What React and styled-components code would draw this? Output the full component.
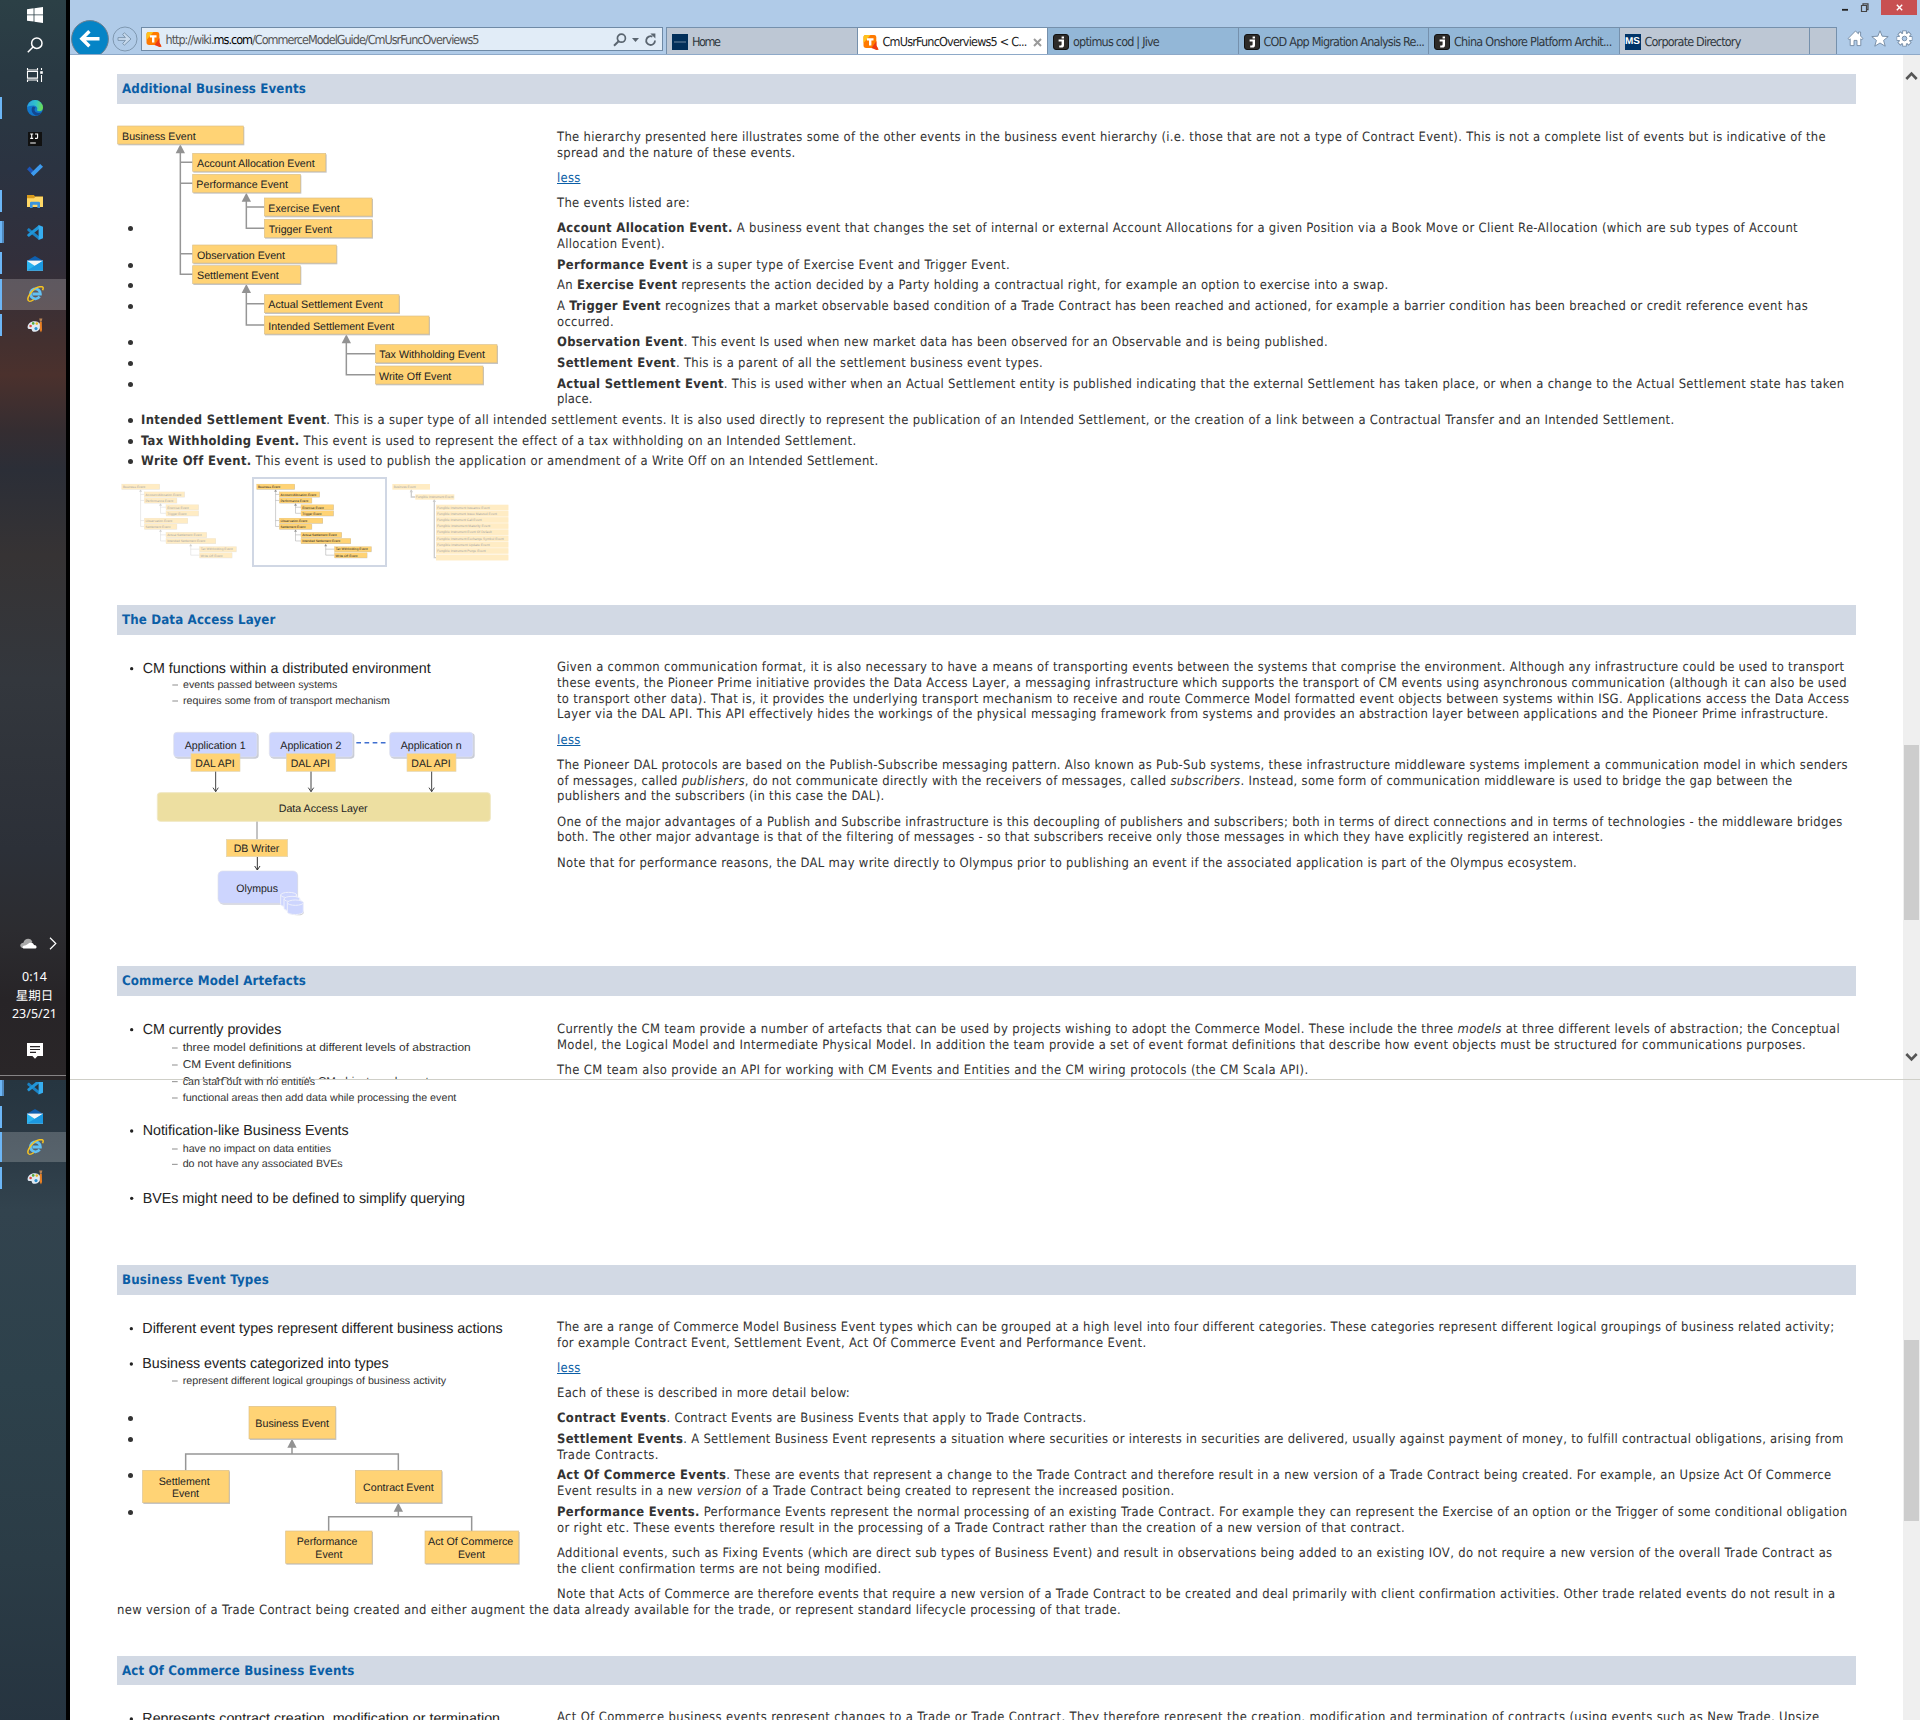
import React, { useLayoutEffect, useRef, useState } from "react";
import styled, { createGlobalStyle, css } from "styled-components";

const GlobalStyle = createGlobalStyle`
  * { box-sizing: border-box; }
  html, body { margin: 0; padding: 0; background: #fff; }
  body {
    width: 1920px;
    height: 1720px;
    overflow: hidden;
    font-family: "DejaVu Sans Condensed", "DejaVu Sans", "Noto Sans CJK SC", sans-serif;
    font-stretch: condensed;
    text-rendering: geometricPrecision;
    color: #333;
  }
`;

const ui = '"DejaVu Sans Condensed", "DejaVu Sans", sans-serif';

/* ---------- page frame ---------- */

const Page = styled.div`
  display: grid;
  grid-template-columns: 70px 1fr;
  width: 1920px;
  height: 1720px;
  overflow: hidden;
`;

const Taskbars = styled.aside`
  display: flex;
  flex-direction: column;
  border-right: 4px solid #000;
`;

const Windows = styled.div`
  display: flex;
  flex-direction: column;
  min-width: 0;
`;

/* ---------- taskbar ---------- */

const Taskbar = styled.div`
  display: flex;
  flex-direction: column;
  height: 1076px;
  border-bottom: 1px solid #868385;
  background: linear-gradient(
    180deg,
    #2c4046 0,
    #293943 75px,
    #2b3341 170px,
    #322f3b 262px,
    #44302f 345px,
    #4b312d 375px,
    #352d31 430px,
    #2b2e37 470px,
    #363334 555px,
    #33373d 680px,
    #2c3038 850px,
    #2c2c30 930px,
    #272427 1000px,
    #2a2628 1076px
  );
`;

const TaskbarRest = styled.div`
  display: flex;
  flex-direction: column;
  flex: 1;
  border-top: 4px solid #2a2628;
  background: linear-gradient(180deg, #263540 0, #2b3944 60px, #32434e 130px, #2d414b 300px, #2b3c46 480px, #263440 644px);
`;

const TaskItem = styled.div`
  display: flex;
  align-items: center;
  justify-content: center;
  flex: none;
  height: ${(p) => p.$h || 31}px;
  padding-left: 4px;
  margin-top: ${(p) => p.$mt || 0}px;
  ${(p) =>
    p.$running &&
    css`
      background: linear-gradient(#6cb6f6, #6cb6f6) 0 50% / 2px ${p.$active ? "100%" : "22px"} no-repeat;
    `}
  ${(p) =>
    p.$stacked &&
    css`
      background: linear-gradient(#6cb6f6, #6cb6f6) 0 50% / 2px 22px no-repeat,
        linear-gradient(#4f88bd, #4f88bd) 2px 50% / 2px 22px no-repeat;
    `}
  ${(p) => p.$active && css`background-color: rgba(255, 255, 255, 0.2);`}
`;

const Tray = styled.div`
  display: flex;
  flex-direction: column;
  align-items: center;
  margin-top: auto;
  color: #fff;
`;

const TrayRow = styled.div`
  display: flex;
  align-items: center;
  gap: 12px;
  padding-left: 11px;
  height: 20px;
`;

const Clock = styled.div`
  display: flex;
  flex-direction: column;
  align-items: center;
  margin: 15px 0 0 3px;
  font: 12.5px/18.6px "Noto Sans", "Noto Sans CJK SC", sans-serif;
`;

const NoteSlot = styled.div`
  margin: 19px 0 16px 4px;
  height: 16px;
  display: flex;
`;

/* ---------- browser chrome ---------- */

const Header = styled.header`
  display: flex;
  flex-direction: column;
  height: 55px;
  border-bottom: 1px solid #8ea9c8;
  background: #b0cbe8;
  overflow: hidden;
  flex: none;
`;

const WindowControls = styled.div`
  display: flex;
  justify-content: flex-end;
  align-items: center;
  height: 15px;
  padding-right: 3px;
  gap: 12px;
`;

const CloseButton = styled.div`
  display: flex;
  align-items: center;
  justify-content: center;
  width: 36px;
  height: 15px;
  background: #c85051;
`;

const NavRow = styled.div`
  display: flex;
  align-items: flex-start;
  height: 39px;
`;

const Back = styled.div`
  margin: 5px 3px 0 1px;
  width: 38px;
  height: 38px;
  flex: none;
`;

const Forward = styled.div`
  margin: 11px 3px 0 0;
  width: 26px;
  height: 26px;
  flex: none;
`;

const AddressBar = styled.div`
  display: flex;
  align-items: center;
  width: 522px;
  height: 24px;
  margin: 12px 3px 0 0;
  padding: 1px 5px 0 4px;
  border: 1px solid #6f8aa6;
  background: #e1ecf7;
  font: 12.5px/22px ${ui};
  color: #555;
  white-space: nowrap;
  b { font-weight: normal; color: #000; }
`;

const UrlSlot = styled.div`
  flex: 1;
  padding-left: 3.5px;
`;

const AddressTools = styled.div`
  display: flex;
  align-items: center;
  gap: 5px;
`;

const Tabs = styled.nav`
  display: flex;
  height: 27px;
  margin-top: 12px;
  border-top: 1px solid #7590ac;
  border-right: 1px solid #7590ac;
`;

const tabColors = { grey: "#bdc7d4", blue: "#93b7d7", active: "#ffffff" };

const Tab = styled.div`
  display: flex;
  align-items: center;
  width: ${(p) => p.$w || 190.5}px;
  flex: none;
  padding: 2px 5px 0 5px;
  gap: 4px;
  background: ${(p) => tabColors[p.$tone]};
  border-left: 1px solid #7590ac;
  font: 12.5px/20px ${ui};
  color: ${(p) => (p.$tone === "active" ? "#222" : "#303840")};
  white-space: nowrap;
  svg { flex: none; }
`;

const TabClose = styled.div`
  margin-left: auto;
  display: flex;
`;

const ToolIcons = styled.div`
  display: flex;
  align-items: center;
  gap: 7px;
  margin: 15px 0 0 10px;
`;

/* ---------- document ---------- */

const Viewport = styled.div`
  display: flex;
  height: ${(p) => (p.$h ? p.$h + "px" : "auto")};
  flex: ${(p) => (p.$h ? "none" : "1")};
  overflow: ${(p) => (p.$clip ? "hidden" : "visible")};
  min-height: 0;
`;

const Doc = styled.main`
  width: 1833px;
  padding: ${(p) => p.$top || 0}px 47px 0;
`;

const Rail = styled.div`
  display: flex;
  flex-direction: column;
  align-items: center;
  width: 17px;
  background: #efefef;
`;

const Thumb = styled.div`
  width: 15px;
  height: ${(p) => p.$h}px;
  margin-top: ${(p) => p.$mt}px;
  background: #cdcdcd;
  flex: none;
`;

const RailArrow = styled.div`
  display: flex;
  margin-top: ${(p) => p.$mt}px;
  flex: none;
`;

const Divider = styled.div`
  height: 1px;
  background: #cfcfc8;
  flex: none;
`;

const Section = styled.section`
  height: ${(p) => p.$h}px;
`;

const Heading = styled.h2`
  margin: 0;
  height: ${(p) => p.$h || 30}px;
  padding: 0 5px;
  background: #d2d9e4;
  color: #0b5ea6;
  font: bold 13.2px/31px ${ui};
`;

const Body = styled.div`
  padding-top: ${(p) => p.$pt || 25}px;
  font: 12.9px/15.8px ${ui};
`;

const Figure = styled.figure`
  float: left;
  margin: ${(p) => p.$mt || 0}px 0 0;
  width: 440px;
  height: ${(p) => p.$h}px;
  svg { display: block; overflow: visible; }
`;

const Para = styled.p`
  margin: 0 0 9.4px;
`;

const List = styled.ul`
  list-style: none;
  margin: 0 0 ${(p) => p.$mb || 0}px;
  padding: 0 0 0 24px;
`;

const Item = styled.li`
  position: relative;
  margin-bottom: 4.8px;
  &::before {
    content: "";
    position: absolute;
    left: -13px;
    top: 5px;
    width: 5px;
    height: 5px;
    border-radius: 50%;
    background: #333;
  }
`;

const LineBox = styled.span`
  display: block;
  height: 15.8px;
  white-space: nowrap;
`;

const LineText = styled.span`
  font-variant-ligatures: none;
  a { color: #0b5ea6; text-decoration: underline; }
`;

const Thumbs = styled.div`
  display: flex;
  width: 405px;
  padding-top: 2.5px;
`;

const ThumbFrame = styled.div`
  width: 135px;
  height: 90px;
  border: 2px solid ${(p) => (p.$on ? "#d0d7e4" : "transparent")};
  svg { display: block; overflow: visible; opacity: ${(p) => (p.$on ? 1 : 0.42)}; }
`;

/* A single line of text, tracked so that it measures w pixels. */
function Fit({ w, children }) {
  const ref = useRef(null);
  const [tracking, setTracking] = useState(0);
  useLayoutEffect(() => {
    const el = ref.current;
    el.style.letterSpacing = "0px";
    const natural = el.getBoundingClientRect().width;
    setTracking((w - natural) / el.textContent.length);
  }, [w]);
  return (
    <LineText ref={ref} style={{ letterSpacing: tracking + "px" }}>
      {children}
    </LineText>
  );
}

function Line({ w, children }) {
  return (
    <LineBox>
      <Fit w={w}>{children}</Fit>
    </LineBox>
  );
}

const Less = () => (
  <Para>
    <Line w={23.5}>
      <a>less</a>
    </Line>
  </Para>
);

/* ---------- diagram parts ---------- */

const DIAGRAM = '"Liberation Sans", Arial, sans-serif';

function T({ x, y, w, s = 32.5, c = "#222", children }) {
  return (
    <text x={x} y={y} fontSize={s} fill={c} fontFamily={DIAGRAM} textLength={w} lengthAdjust="spacingAndGlyphs">
      {children}
    </text>
  );
}

function Node({ x, y, w, h = 54 }) {
  return (
    <g>
      <rect x={x + 2} y={y + 3} width={w + 1} height={h + 1} fill="#c4c4c4" />
      <rect x={x} y={y} width={w} height={h} fill="#ffd375" stroke="#dcc08a" strokeWidth="2" />
    </g>
  );
}

const Up = ({ x, y }) => <path d={`M${x} ${y}l14 27h-28z`} fill="#929292" />;

const Bullet = ({ x, y, w, children }) => (
  <g>
    <circle cx={x} cy={y - 13} r="5" fill="#222" />
    <T x={x + 33} y={y} w={w} s={44}>{children}</T>
  </g>
);

const Dash = ({ x, y, w, s = 31.5, children }) => (
  <g>
    <path d={`M${x} ${y - 9}h17`} stroke="#777" strokeWidth="2.5" />
    <T x={x + 32} y={y} w={w} s={s} c="#333">{children}</T>
  </g>
);

const treeNodes = [
  [143, 48, 377, "Business Event", 156, 221],
  [368, 130, 399, "Account Allocation Event", 381, 353],
  [368, 193, 323, "Performance Event", 379, 275],
  [583, 264, 323, "Exercise Event", 595, 214],
  [583, 328, 323, "Trigger Event", 596, 190],
  [368, 405, 431, "Observation Event", 381, 264],
  [368, 467, 323, "Settlement Event", 381, 245],
  [583, 554, 404, "Actual Settlement Event", 595, 343],
  [583, 618, 494, "Intended Settlement Event", 595, 378],
  [916, 704, 365, "Tax Withholding Event", 928, 317],
  [916, 768, 323, "Write Off Event", 927, 217],
];

function Tree() {
  return (
    <g>
      <path
        d="M331 125V493H368M331 157h37M331 220h37M331 431h37M529 270V355H583M529 291h54M529 545V645H583M529 581h54M829 695V794H916M829 731h87"
        fill="none"
        stroke="#969696"
        strokeWidth="4.5"
      />
      <Up x={331} y={103} />
      <Up x={529} y={248} />
      <Up x={529} y={522} />
      <Up x={829} y={673} />
      {treeNodes.map(([x, y, w, label, tx, tw]) => (
        <g key={label}>
          <Node x={x} y={y} w={w} />
          <T x={tx} y={y + 41} w={tw}>{label}</T>
        </g>
      ))}
    </g>
  );
}

const instrumentEvents = [
  "Fungible Instrument Issuance Event",
  "Fungible Instrument Issue Matured Event",
  "Fungible Instrument Call Event",
  "Fungible Instrument Maturity Event",
  "Fungible Instrument Event Of Default",
  "Fungible Instrument Exchange Symbol Event",
  "Fungible Instrument Update Event",
  "Fungible Instrument Purge Event",
];

const instrumentWidths = [158, 180, 134, 160, 164, 200, 158, 146];

function InstrumentTree() {
  return (
    <svg width="131" height="86" viewBox="957 1107 393 258">
      <path d="M1024 1139V1161H1036M1093 1168V1343H1099" fill="none" stroke="#8a8a8a" strokeWidth="4" />
      <path d="M1024 1138l5 9h-10zM1093 1167l5 9h-10z" fill="#8a8a8a" />
      <rect x="967" y="1122" width="113" height="17" fill="#ffd375" />
      <T x={971} y={1134} w={66} s={10}>Business Event</T>
      <rect x="1036" y="1153" width="117" height="16" fill="#ffd375" />
      <T x={1037} y={1165} w={113} s={10}>Fungible Instrument Event</T>
      <rect x="1098" y="1184" width="217" height="167" fill="#ffe9bb" />
      {instrumentEvents.map((label, i) => (
        <g key={label}>
          <rect x="1098" y={1184.5 + i * 18.6} width="217" height="16" fill="#ffd375" />
          <T x={1101} y={1196 + i * 18.6} w={instrumentWidths[i]} s={10}>{label}</T>
        </g>
      ))}
      <rect x="1098" y="1335" width="217" height="16" fill="#ffd375" />
    </svg>
  );
}

const MiniTree = () => (
  <svg width="131" height="86" viewBox="553 1107 393 258">
    <g transform="translate(517.8 1108.4) scale(0.302 0.286)">
      <Tree />
    </g>
  </svg>
);

function ApplicationStack({ x, label, lx, lw, ax }) {
  return (
    <g>
      <rect x={x + 3} y={280} width={252} height={76} rx="10" fill="#c9ccd6" />
      <rect x={x} y={277} width={250} height={74} rx="10" fill="#cdd5fe" stroke="#dfe1ea" strokeWidth="2" />
      <T x={lx} y={326} w={lw}>{label}</T>
      <rect x={ax} y={341} width={147} height={53} fill="#ffd375" stroke="#e2d5b5" strokeWidth="2" />
      <T x={ax + 13} y={381} w={118}>DAL API</T>
      <path d={`M${ax + 74} 395v60m-8 -12l8 12l8 -12`} fill="none" stroke="#444" strokeWidth="3" />
    </g>
  );
}

const Cylinder = ({ x, y }) => (
  <g fill="#cdd5fe" stroke="#eef0fb" strokeWidth="3">
    <path d={`M${x} ${y}v28c0 10 48 10 48 0v-28z`} />
    <ellipse cx={x + 24} cy={y} rx="24" ry="8" />
  </g>
);

function AccessLayerDiagram() {
  return (
    <svg width="440" height="280" viewBox="51 57 1320 840">
      <Bullet x={95} y={99} w={864}>CM functions within a distributed environment</Bullet>
      <Dash x={217} y={144} w={463}>events passed between systems</Dash>
      <Dash x={217} y={192} w={621}>requires some from of transport mechanism</Dash>
      <ApplicationStack x={221} label="Application 1" lx={254} lw={183} ax={273} />
      <ApplicationStack x={508} label="Application 2" lx={541} lw={183} ax={559} />
      <ApplicationStack x={869} label="Application n" lx={902} lw={183} ax={921} />
      <path d="M769 308h88" stroke="#3f6fd0" strokeWidth="4.5" strokeDasharray="14 10.5" />
      <rect x="172" y="458" width="999" height="86" rx="9" fill="#eddfa1" stroke="#f0e8c4" strokeWidth="3" />
      <T x={536} y={515} w={267}>Data Access Layer</T>
      <path d="M471 545v52" stroke="#888" strokeWidth="3" />
      <rect x="379" y="598" width="184" height="52" fill="#ffd375" stroke="#e2d5b5" strokeWidth="2" />
      <T x={401} y={637} w={137}>DB Writer</T>
      <path d="M472 651v39m-8 -12l8 12l8 -12" fill="none" stroke="#333" strokeWidth="3" />
      <rect x="357" y="697" width="237" height="97" rx="14" fill="#cfd1da" />
      <rect x="354" y="693" width="239" height="97" rx="14" fill="#cdd5fe" stroke="#dfe1ea" strokeWidth="2" />
      <T x={409} y={756} w={125}>Olympus</T>
      <path d="M560 806q10 20 32 20t20 -14" fill="#c9c9c9" />
      <Cylinder x={542} y={765} />
      <Cylinder x={552} y={777} />
      <Cylinder x={562} y={788} />
    </svg>
  );
}

function TypesDiagram() {
  return (
    <svg width="440" height="278" viewBox="141 207 1320 834">
      <Bullet x={184} y={249} w={1081}>Different event types represent different business actions</Bullet>
      <Bullet x={184} y={355} w={739}>Business events categorized into types</Bullet>
      <Dash x={306} y={402} w={790}>represent different logical groupings of business activity</Dash>
      <path d="M347 661V612H985V661M666 612V585M776 843V800H1205V843M985 800V775" fill="none" stroke="#969696" strokeWidth="4.5" />
      <Up x={666} y={566} />
      <Up x={985} y={758} />
      <Node x={537} y={469} w={259} h={97} />
      <T x={556} y={531} w={221}>Business Event</T>
      <Node x={218} y={661} w={259} h={97} />
      <T x={266} y={704} w={153}>Settlement</T>
      <T x={306} y={741} w={81}>Event</T>
      <Node x={856} y={661} w={259} h={97} />
      <T x={879} y={724} w={212}>Contract Event</T>
      <Node x={647} y={843} w={259} h={97} />
      <T x={680} y={886} w={182}>Performance</T>
      <T x={736} y={923} w={81}>Event</T>
      <Node x={1065} y={843} w={281} h={97} />
      <T x={1074} y={886} w={256}>Act Of Commerce</T>
      <T x={1164} y={923} w={81}>Event</T>
    </svg>
  );
}

/* ---------- icons ---------- */

const WindowsIcon = () => (
  <svg width="16" height="16" viewBox="0 0 16 16" fill="#fff">
    <path d="M0 2.2L6.6 1.3V7.5H0zM7.4 1.2L16 0V7.5H7.4zM0 8.3H6.6V14.6L0 13.7zM7.4 8.3H16V16L7.4 14.8z" />
  </svg>
);

const SearchIcon = () => (
  <svg width="18" height="16" viewBox="0 0 18 16" fill="none" stroke="#fff" strokeWidth="1.5">
    <circle cx="10.8" cy="6.2" r="5.2" />
    <path d="M7 10L1.8 15.2" />
  </svg>
);

const TaskViewIcon = () => (
  <svg width="18" height="16" viewBox="0 0 18 16" fill="none" stroke="#fff" strokeWidth="1.1">
    <path d="M1.5 1v2h10V1M1.5 15v-2h10v2M1.5 4.5h10v6.6h-10zM15.5 1v2M15.5 8v7" />
    <rect x="14.2" y="4.2" width="2.6" height="2.6" fill="#fff" stroke="none" />
  </svg>
);

const EdgeIcon = () => (
  <svg width="16" height="16" viewBox="0 0 16 16">
    <defs>
      <linearGradient id="edgeTop" x1="0" y1="0.4" x2="1" y2="0.5">
        <stop offset="0" stopColor="#2a9fe0" />
        <stop offset="0.55" stopColor="#31c3c9" />
        <stop offset="1" stopColor="#6fe04a" />
      </linearGradient>
    </defs>
    <circle cx="8" cy="8" r="8" fill="#1277cc" />
    <path d="M0.1 7A8 8 0 0 1 16 7.4C16 10 14 11.2 12 11.2S9.6 10.2 10.2 9.2C10.8 7.4 9 5.4 6.4 5.4S1 6.2 0.1 7z" fill="url(#edgeTop)" />
    <path d="M6 6.6C3.6 8.4 4.4 13.6 8.6 15.6C12 15.6 14 14 14.8 12.2C12 13.6 8 13 7.6 10.2C7.4 8.8 8 8 8.6 7.4z" fill="#14478f" />
  </svg>
);

const IntelliJIcon = () => (
  <svg width="14" height="14" viewBox="0 0 14 14">
    <rect width="14" height="14" fill="#111" />
    <path d="M2.2 2h3M3.7 2v4.4M2.2 6.4h3M7 2h2.6v3.4q0 1-1.1 1H7M2.2 11h5.6" fill="none" stroke="#fff" strokeWidth="1.1" />
  </svg>
);

const TodoIcon = () => (
  <svg width="16" height="12" viewBox="0 0 16 12">
    <path d="M2.6 2.6L0 5.2L6.4 11.8L9 9.2z" fill="#1d55b8" />
    <path d="M13.2 0L16 2.8L6.6 12L3.8 9.2z" fill="#3d9bee" />
  </svg>
);

const FolderIcon = () => (
  <svg width="16" height="13" viewBox="0 0 16 13">
    <path d="M0 0h6.8l1.4 1.6H16V4H0z" fill="#d79a1c" />
    <path d="M0 3.2h7l1.4-1.4H16V12H0z" fill="#ffd866" />
    <path d="M3 13V8q0-1.2 1.2-1.2h7.6q1.2 0 1.2 1.2v5h-2.6V9.8H5.6V13z" fill="#3a94dd" />
  </svg>
);

const VsCodeIcon = ({ cut }) => (
  <svg width="16" height={cut ? 13 : 15} viewBox={cut ? "0 2.5 16 13" : "0 0 16 15"}>
    <path d="M0.3 4.2L1.8 3L12 11.2V15L0.3 5.4z" fill="#1a82c4" />
    <path d="M0.3 10.6L1.8 12L12 4V0L0.3 9.4z" fill="#2196d8" />
    <path d="M11.6 0L16 1.8V13.2L11.6 15z" fill="#36aef0" />
  </svg>
);

const MailIcon = () => (
  <svg width="16" height="15" viewBox="0 0 16 15">
    <path d="M0 4.8L8 0L16 4.8V9H0z" fill="#0f5fae" />
    <path d="M0 4.6H16V14.6H0z" fill="#f4f6f8" />
    <path d="M0 4.8L8 10L16 4.8V14.6H0z" fill="#2cb4f0" />
    <path d="M0 14.6L16 4.8V14.6z" fill="#1c98e0" />
  </svg>
);

const IeIcon = () => (
  <svg width="17" height="16" viewBox="0 0 17 16">
    <path d="M12.6 10.6A5 5 0 1 1 13.4 8H5.4" fill="none" stroke="#63c1f3" strokeWidth="2.8" />
    <path d="M1.8 15C-1.4 12.6 6 0.8 14 0.6C16.4 0.6 16.6 2 15.6 4.2" fill="none" stroke="#f6c421" strokeWidth="1.5" />
    <path d="M1.8 15C3 15.8 5.6 14.4 7 13.4" fill="none" stroke="#f6c421" strokeWidth="1.2" />
  </svg>
);

const PaintIcon = () => (
  <svg width="17" height="15" viewBox="0 0 17 15">
    <path d="M0.6 9.4C0.4 5.6 4 3 8 3.2C12 3.4 14 6 13.4 9C12.8 12.4 9.4 14.2 6.6 13.8C4.6 13.4 5.4 11.6 4.2 11C3 10.6 0.8 11.6 0.6 9.4z" fill="#dfe9f2" />
    <circle cx="3.6" cy="8" r="1.3" fill="#e2493a" />
    <circle cx="6.2" cy="5.4" r="1.3" fill="#55a83a" />
    <circle cx="9.8" cy="5.6" r="1.3" fill="#e7b52b" />
    <circle cx="9" cy="10.6" r="1.6" fill="#2b8fd0" />
    <path d="M12.2 0.4h3.2l-0.8 3.4h-1.6z" fill="#b98455" />
    <path d="M12.8 4h2l0.2 8l-1 2.6l-1.2-2.6z" fill="#e98024" />
  </svg>
);

const CloudIcon = () => (
  <svg width="17" height="11" viewBox="0 0 17 11">
    <path d="M3 10C-1 9.6-0.4 5 3.4 4.8C4.4-0.6 11.4-0.6 12.4 4L6 10z" fill="#a9a9a9" />
    <path d="M4 10.6C2 10.4 2 8 4.4 7.6C7 7.6 8 4.6 11 4.8C13 4.8 13.6 6 14 7C17.4 7 17.2 10.6 14.6 10.6z" fill="#fff" />
  </svg>
);

const NoteIcon = () => (
  <svg width="16" height="16" viewBox="0 0 16 16">
    <path d="M0 0h16v13h-5.4L8 15.8L5.4 13H0z" fill="#fff" />
    <path d="M3 3.6h10M3 6.5h10M3 9.4h6" stroke="#2a2628" strokeWidth="1.1" />
  </svg>
);

const TwikiIcon = () => (
  <svg width="16" height="15" viewBox="-0.5 0 16 15">
    <path d="M2.6 0H10.8Q12.6 0 12.8 2V10.4L15 14.4L13 15L10.6 13H2.6Q0 13 0 10.6V2.4Q0 0 2.6 0z" fill="#ff7a00" />
    <path d="M2.6 0H7L0 8V2.4Q0 0 2.6 0z" fill="#ffc21a" />
    <path d="M13 6v4.4L15 14.4L13 15L8 13z" fill="#ee3a12" />
    <path d="M3.4 3.2H10V5.4H7.9V10.6H5.5V5.4H3.4z" fill="#fff" />
  </svg>
);

const JiveIcon = () => (
  <svg width="16" height="16" viewBox="0 0 16 16">
    <rect x="0.5" y="0.5" width="15" height="15" rx="2.5" fill="#2d2b29" stroke="#111" />
    <path d="M8.6 2.6h2.4v2h-2.4zM5.6 5.6H11V11q0 2.6-2.6 2.6H6.2v-2h1.4q1 0 1-1V7.4H5.6z" fill="#fff" />
  </svg>
);

const HomeTabIcon = () => (
  <svg width="16" height="16" viewBox="0 0 16 16">
    <rect width="16" height="16" fill="#022f5a" />
    <path d="M2 8h12" stroke="#7a93ab" strokeWidth="0.9" />
  </svg>
);

const MsBadge = styled.span`
  width: 16px;
  height: 16px;
  flex: none;
  background: #003468;
  color: #fff;
  font: bold 10px/16px "Liberation Sans", Arial, sans-serif;
  text-align: center;
`;

const Chevron = ({ down }) => (
  <svg width="13" height="10" viewBox="0 0 13 10">
    <path d={down ? "M1.3 2L6.5 7.4L11.7 2" : "M1.3 8L6.5 2.6L11.7 8"} fill="none" stroke="#555" strokeWidth="2.6" />
  </svg>
);

/* ---------- assembled areas ---------- */

function LeftTaskbars() {
  return (
    <Taskbars>
      <Taskbar>
        <TaskItem $h={30}><WindowsIcon /></TaskItem>
        <TaskItem $h={30}><SearchIcon /></TaskItem>
        <TaskItem $h={30}><TaskViewIcon /></TaskItem>
        <TaskItem $mt={2.5} $running><EdgeIcon /></TaskItem>
        <TaskItem><IntelliJIcon /></TaskItem>
        <TaskItem><TodoIcon /></TaskItem>
        <TaskItem $running><FolderIcon /></TaskItem>
        <TaskItem $stacked><VsCodeIcon /></TaskItem>
        <TaskItem $running><MailIcon /></TaskItem>
        <TaskItem $running $active><IeIcon /></TaskItem>
        <TaskItem $running><PaintIcon /></TaskItem>
        <Tray>
          <TrayRow>
            <CloudIcon />
            <svg width="8" height="13" viewBox="0 0 8 13">
              <path d="M1 0.8L6.8 6.5L1 12.2" fill="none" stroke="#fff" strokeWidth="1.2" />
            </svg>
          </TrayRow>
          <Clock>
            <span>0:14</span>
            <span>星期日</span>
            <span>23/5/21</span>
          </Clock>
          <NoteSlot><NoteIcon /></NoteSlot>
        </Tray>
      </Taskbar>
      <TaskbarRest>
        <TaskItem $h={16} $stacked><VsCodeIcon cut /></TaskItem>
        <TaskItem $h={31} $mt={5} $running><MailIcon /></TaskItem>
        <TaskItem $h={30} $running $active><IeIcon /></TaskItem>
        <TaskItem $h={31} $running><PaintIcon /></TaskItem>
      </TaskbarRest>
    </Taskbars>
  );
}

function BrowserHeader() {
  return (
    <Header>
      <WindowControls>
        <svg width="32" height="12" viewBox="0 0 32 12">
          <path d="M5 7.8h6" stroke="#222" strokeWidth="1.8" />
          <path d="M24.5 3.5h5v6h-5zM26 3.5V1.8h5V7.6H29.5" fill="none" stroke="#444" strokeWidth="1.2" />
        </svg>
        <CloseButton>
          <svg width="7" height="7" viewBox="0 0 7 7">
            <path d="M0.8 0.8L6.2 6.2M6.2 0.8L0.8 6.2" stroke="#fff" strokeWidth="1.4" />
          </svg>
        </CloseButton>
      </WindowControls>
      <NavRow>
        <Back>
          <svg width="38" height="38" viewBox="0 0 38 38">
            <circle cx="19" cy="19" r="18.4" fill="#0584c6" stroke="#6b7f90" strokeWidth="1" />
            <path d="M28.5 18.7H11.5M18.4 11.2L10.8 18.7L18.4 26.2" fill="none" stroke="#fff" strokeWidth="3.4" />
          </svg>
        </Back>
        <Forward>
          <svg width="26" height="26" viewBox="0 0 26 26">
            <circle cx="13" cy="13" r="12" fill="none" stroke="#7f98b0" />
            <path d="M6 11.6h7.4L10.6 8.4L12.4 6.8L19 13L12.4 19.2L10.6 17.6L13.4 14.4H6z" fill="#c7d9ec" stroke="#7f98b0" />
          </svg>
        </Forward>
        <AddressBar>
          <TwikiIcon />
          <UrlSlot>
            <Fit w={313}>http://wiki.<b>ms.com</b>/CommerceModelGuide/CmUsrFuncOverviews5</Fit>
          </UrlSlot>
          <AddressTools>
            <svg width="14" height="14" viewBox="0 0 14 14" fill="none" stroke="#5a6570">
              <circle cx="8.4" cy="5.2" r="4" strokeWidth="1.7" />
              <path d="M5.6 8.2L1 12.8" strokeWidth="2" />
            </svg>
            <svg width="7" height="4" viewBox="0 0 7 4"><path d="M0 0h7L3.5 4z" fill="#5a6570" /></svg>
            <svg width="13" height="14" viewBox="0 0 13 14">
              <path d="M8.4 3.6A4.4 4.4 0 1 0 11 7.6" fill="none" stroke="#5a6570" strokeWidth="1.8" />
              <path d="M6.4 0.6L11.4 0.6L11.4 5.6z" fill="#5a6570" />
            </svg>
          </AddressTools>
        </AddressBar>
        <Tabs>
          <Tab $tone="grey"><HomeTabIcon /><Fit w={27.5}>Home</Fit></Tab>
          <Tab $tone="active">
            <TwikiIcon /><Fit w={144}>CmUsrFuncOverviews5 &lt; C...</Fit>
            <TabClose>
              <svg width="9" height="9" viewBox="0 0 9 9"><path d="M1 1L8 8M8 1L1 8" stroke="#9a9a9a" strokeWidth="2" /></svg>
            </TabClose>
          </Tab>
          <Tab $tone="blue"><JiveIcon /><Fit w={86}>optimus cod | Jive</Fit></Tab>
          <Tab $tone="blue"><JiveIcon /><Fit w={160.5}>COD App Migration Analysis Re...</Fit></Tab>
          <Tab $tone="blue"><JiveIcon /><Fit w={157.5}>China Onshore Platform Archit...</Fit></Tab>
          <Tab $tone="grey"><MsBadge>MS</MsBadge><Fit w={96}>Corporate Directory</Fit></Tab>
          <Tab $tone="grey" $w={27} />
        </Tabs>
        <ToolIcons>
          <svg width="17" height="17" viewBox="0 0 17 17">
            <path d="M1 8.6L8.5 1L11.4 3.8V2H13.6V6L16 8.6L14.8 9.6L13.8 8.8V15.6H10V10.4H7V15.6H3.2V8.8L2.2 9.6z" fill="#fff" stroke="#7288a0" strokeWidth="0.9" />
          </svg>
          <svg width="18" height="17" viewBox="0 0 18 17">
            <path d="M9 0.8L11.2 6.2L17.2 6.6L12.6 10.4L14.2 16.2L9 13L3.8 16.2L5.4 10.4L0.8 6.6L6.8 6.2z" fill="#fff" stroke="#7288a0" strokeWidth="0.9" />
          </svg>
          <svg width="17" height="17" viewBox="0 0 17 17">
            <g stroke="#7288a0" strokeWidth="4.4">
              <path d="M8.5 0.6V16.4M0.6 8.5H16.4M2.9 2.9L14.1 14.1M14.1 2.9L2.9 14.1" />
            </g>
            <g stroke="#fff" strokeWidth="2.8">
              <path d="M8.5 1.2V15.8M1.2 8.5H15.8M3.4 3.4L13.6 13.6M13.6 3.4L3.4 13.6" />
            </g>
            <circle cx="8.5" cy="8.5" r="5.2" fill="#fff" />
            <circle cx="8.5" cy="8.5" r="2.3" fill="#b0cbe8" stroke="#7288a0" strokeWidth="0.9" />
          </svg>
        </ToolIcons>
      </NavRow>
    </Header>
  );
}

function Title({ w, h, children }) {
  return (
    <Heading $h={h}>
      <Fit w={w}>{children}</Fit>
    </Heading>
  );
}

function AdditionalEvents() {
  return (
    <Section $h={531}>
      <Title w={184}>Additional Business Events</Title>
      <Body $pt={26}>
        <Figure $h={280} $mt={-1}>
          <svg width="440" height="280" viewBox="141 57 1320 840"><Tree /></svg>
        </Figure>
        <Para>
          <Line w={1269}>The hierarchy presented here illustrates some of the other events in the business event hierarchy (i.e. those that are not a type of Contract Event). This is not a complete list of events but is indicative of the</Line>
          <Line w={238.5}>spread and the nature of these events.</Line>
        </Para>
        <Less />
        <Para><Line w={133}>The events listed are:</Line></Para>
        <List>
          <Item>
            <Line w={1241}><b>Account Allocation Event.</b> A business event that changes the set of internal or external Account Allocations for a given Position via a Book Move or Client Re-Allocation (which are sub types of Account</Line>
            <Line w={108}>Allocation Event).</Line>
          </Item>
          <Item><Line w={453}><b>Performance Event</b> is a super type of Exercise Event and Trigger Event.</Line></Item>
          <Item><Line w={831.5}>An <b>Exercise Event</b> represents the action decided by a Party holding a contractual right, for example an option to exercise into a swap.</Line></Item>
          <Item>
            <Line w={1251}>A <b>Trigger Event</b> recognizes that a market observable based condition of a Trade Contract has been reached and actioned, for example a barrier condition has been breached or credit reference event has</Line>
            <Line w={57}>occurred.</Line>
          </Item>
          <Item><Line w={771}><b>Observation Event</b>. This event Is used when new market data has been observed for an Observable and is being published.</Line></Item>
          <Item><Line w={486}><b>Settlement Event</b>. This is a parent of all the settlement business event types.</Line></Item>
          <Item>
            <Line w={1287.5}><b>Actual Settlement Event</b>. This is used wither when an Actual Settlement entity is published indicating that the external Settlement has taken place, or when a change to the Actual Settlement state has taken</Line>
            <Line w={35.5}>place.</Line>
          </Item>
          <Item><Line w={1533.5}><b>Intended Settlement Event</b>. This is a super type of all intended settlement events. It is also used directly to represent the publication of an Intended Settlement, or the creation of a link between a Contractual Transfer and an Intended Settlement.</Line></Item>
          <Item><Line w={715.5}><b>Tax Withholding Event.</b> This event is used to represent the effect of a tax withholding on an Intended Settlement.</Line></Item>
          <Item><Line w={737.5}><b>Write Off Event.</b> This event is used to publish the application or amendment of a Write Off on an Intended Settlement.</Line></Item>
        </List>
        <Thumbs>
          <ThumbFrame><MiniTree /></ThumbFrame>
          <ThumbFrame $on><MiniTree /></ThumbFrame>
          <ThumbFrame><InstrumentTree /></ThumbFrame>
        </Thumbs>
      </Body>
    </Section>
  );
}

function AccessLayer() {
  return (
    <Section $h={361}>
      <Title w={153.5}>The Data Access Layer</Title>
      <Body>
        <Figure $h={280} $mt={-1}><AccessLayerDiagram /></Figure>
        <Para>
          <Line w={1287.5}>Given a common communication format, it is also necessary to have a means of transporting events between the systems that comprise the environment. Although any infrastructure could be used to transport</Line>
          <Line w={1290}>these events, the Pioneer Prime initiative provides the Data Access Layer, a messaging infrastructure which supports the transport of CM events using asynchronous communication (although it can also be used</Line>
          <Line w={1292.5}>to transport other data). That is, it provides the underlying transport mechanism to receive and route Commerce Model formatted event objects between systems within ISG. Applications access the Data Access</Line>
          <Line w={1271.5}>Layer via the DAL API. This API effectively hides the workings of the physical messaging framework from systems and provides an abstraction layer between applications and the Pioneer Prime infrastructure.</Line>
        </Para>
        <Less />
        <Para>
          <Line w={1291}>The Pioneer DAL protocols are based on the Publish-Subscribe messaging pattern. Also known as Pub-Sub systems, these infrastructure middleware systems implement a communication model in which senders</Line>
          <Line w={1235.5}>of messages, called <i>publishers</i>, do not communicate directly with the receivers of messages, called <i>subscribers</i>. Instead, some form of communication middleware is used to bridge the gap between the</Line>
          <Line w={327.5}>publishers and the subscribers (in this case the DAL).</Line>
        </Para>
        <Para>
          <Line w={1285.5}>One of the major advantages of a Publish and Subscribe infrastructure is this decoupling of publishers and subscribers; both in terms of direct connections and in terms of technologies - the middleware bridges</Line>
          <Line w={1046.5}>both. The other major advantage is that of the filtering of messages - so that subscribers receive only those messages in which they have explicitly registered an interest.</Line>
        </Para>
        <Para><Line w={1020}>Note that for performance reasons, the DAL may write directly to Olympus prior to publishing an event if the associated application is part of the Olympus ecosystem.</Line></Para>
      </Body>
    </Section>
  );
}

function Artefacts() {
  return (
    <Section $h={113}>
      <Title w={184}>Commerce Model Artefacts</Title>
      <Body $pt={26}>
        <Figure $h={58} $mt={-1}>
          <svg width="440" height="58" viewBox="351 363 1320 174">
            <Bullet x={395} y={402} w={416}>CM currently provides</Bullet>
            <Dash x={516} y={453} w={864} s={34}>three model definitions at different levels of abstraction</Dash>
            <Dash x={516} y={504} w={326} s={34}>CM Event definitions</Dash>
            <Dash x={516} y={555} w={755} s={34}>Scala API for working with CM objects and events</Dash>
          </svg>
        </Figure>
        <Para>
          <Line w={1283}>Currently the CM team provide a number of artefacts that can be used by projects wishing to adopt the Commerce Model. These include the three <i>models</i> at three different levels of abstraction; the Conceptual</Line>
          <Line w={1249}>Model, the Logical Model and Intermediate Physical Model. In addition the team provide a set of event format definitions that describe how event objects must be structured for communications purposes.</Line>
        </Para>
        <Para><Line w={751.5}>The CM team also provide an API for working with CM Events and Entities and the CM wiring protocols (the CM Scala API).</Line></Para>
      </Body>
    </Section>
  );
}

function NotificationFragment() {
  return (
    <Section $h={185}>
      <Figure $h={185}>
        <svg width="440" height="185" viewBox="351 540 1320 555">
          <Dash x={516} y={554} w={397}>can start out with no entities</Dash>
          <Dash x={516} y={603} w={821}>functional areas then add data while processing the event</Dash>
          <Bullet x={395} y={706} w={618}>Notification-like Business Events</Bullet>
          <Dash x={516} y={756} w={445}>have no impact on data entities</Dash>
          <Dash x={516} y={802} w={480}>do not have any associated BVEs</Dash>
          <Bullet x={395} y={908} w={967}>BVEs might need to be defined to simplify querying</Bullet>
        </svg>
      </Figure>
    </Section>
  );
}

function EventTypes() {
  return (
    <Section $h={391}>
      <Title w={147}>Business Event Types</Title>
      <Body>
        <Figure $h={278} $mt={-1}><TypesDiagram /></Figure>
        <Para>
          <Line w={1277.5}>The are a range of Commerce Model Business Event types which can be grouped at a high level into four different categories. These categories represent different logical groupings of business related activity;</Line>
          <Line w={589.5}>for example Contract Event, Settlement Event, Act Of Commerce Event and Performance Event.</Line>
        </Para>
        <Less />
        <Para><Line w={293}>Each of these is described in more detail below:</Line></Para>
        <List $mb={9.8}>
          <Item><Line w={529.5}><b>Contract Events</b>. Contract Events are Business Events that apply to Trade Contracts.</Line></Item>
          <Item>
            <Line w={1286.5}><b>Settlement Events</b>. A Settlement Business Event represents a situation where securities or interests in securities are delivered, usually against payment of money, to fulfill contractual obligations, arising from</Line>
            <Line w={102}>Trade Contracts.</Line>
          </Item>
          <Item>
            <Line w={1274.5}><b>Act Of Commerce Events</b>. These are events that represent a change to the Trade Contract and therefore result in a new version of a Trade Contract being created. For example, an Upsize Act Of Commerce</Line>
            <Line w={617.5}>Event results in a new <i>version</i> of a Trade Contract being created to represent the increased position.</Line>
          </Item>
          <Item>
            <Line w={1290.5}><b>Performance Events.</b> Performance Events represent the normal processing of an existing Trade Contract. For example they can represent the Exercise of an option or the Trigger of some conditional obligation</Line>
            <Line w={848}>or right etc. These events therefore result in the processing of a Trade Contract rather than the creation of a new version of that contract.</Line>
          </Item>
        </List>
        <Para>
          <Line w={1275.5}>Additional events, such as Fixing Events (which are direct sub types of Business Event) and result in observations being added to an existing IOV, do not require a new version of the overall Trade Contract as</Line>
          <Line w={324.5}>the client confirmation terms are not being modified.</Line>
        </Para>
        <Para>
          <Line w={1278.5}>Note that Acts of Commerce are therefore events that require a new version of a Trade Contract to be created and deal primarily with client confirmation activities. Other trade related events do not result in a</Line>
          <Line w={1004}>new version of a Trade Contract being created and either augment the data already available for the trade, or represent standard lifecycle processing of that trade.</Line>
        </Para>
      </Body>
    </Section>
  );
}

function ActOfCommerce() {
  return (
    <Section $h={64}>
      <Title w={232.5} h={29}>Act Of Commerce Business Events</Title>
      <Body>
        <Figure $h={11} $mt={-1}>
          <svg width="440" height="11" viewBox="141 1377 1320 33">
            <Bullet x={184} y={1420} w={1073}>Represents contract creation, modification or termination</Bullet>
          </svg>
        </Figure>
        <Line w={1262.5}>Act Of Commerce business events represent changes to a Trade or Trade Contract. They therefore represent the creation, modification and termination of contracts (using events such as New Trade, Upsize</Line>
      </Body>
    </Section>
  );
}

export default function App() {
  return (
    <>
      <GlobalStyle />
      <Page>
        <LeftTaskbars />
        <Windows>
          <BrowserHeader />
          <Viewport $h={1024} $clip>
            <Doc $top={19}>
              <AdditionalEvents />
              <AccessLayer />
              <Artefacts />
            </Doc>
            <Rail>
              <RailArrow $mt={16}><Chevron /></RailArrow>
              <Thumb $mt={664} $h={175} />
              <RailArrow $mt={132}><Chevron down /></RailArrow>
            </Rail>
          </Viewport>
          <Divider />
          <Viewport>
            <Doc>
              <NotificationFragment />
              <EventTypes />
              <ActOfCommerce />
            </Doc>
            <Rail>
              <Thumb $mt={260} $h={181} />
            </Rail>
          </Viewport>
        </Windows>
      </Page>
    </>
  );
}
